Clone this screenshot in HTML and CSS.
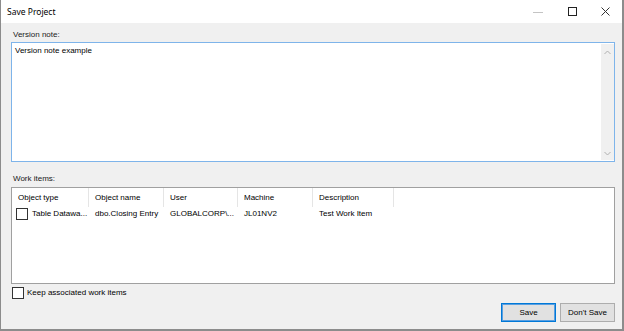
FILE: index.html
```html
<!DOCTYPE html>
<html>
<head>
<meta charset="utf-8">
<link rel="stylesheet" href="styles.css">
</head>
<body>
<div class="window">
  <div class="titlebar">
    <span class="title">Save Project</span>
    <div class="controls">
      <span class="ctl"><svg width="10" height="10" viewBox="0 0 10 10"><path d="M0 5.5H10" stroke="#c4c4c4" stroke-width="1"/></svg></span>
      <span class="ctl"><svg width="9" height="9" viewBox="0 0 9 9"><rect x="0.5" y="0.5" width="8" height="8" fill="none" stroke="#222" stroke-width="1"/></svg></span>
      <span class="ctl"><svg width="9" height="9" viewBox="0 0 9 9"><path d="M0.5 0.5L8.5 8.5M8.5 0.5L0.5 8.5" stroke="#333" stroke-width="1"/></svg></span>
    </div>
  </div>
  <div class="content">
    <div class="label">Version note:</div>
    <div class="note">
      <div class="note-text">Version note example</div>
      <div class="vscroll">
        <svg width="7" height="5" viewBox="0 0 7 5"><path d="M0.5 4L3.5 1L6.5 4" fill="none" stroke="#b0b0b0" stroke-width="1"/></svg>
        <svg width="7" height="5" viewBox="0 0 7 5"><path d="M0.5 1L3.5 4L6.5 1" fill="none" stroke="#b0b0b0" stroke-width="1"/></svg>
      </div>
    </div>
    <div class="label label-work">Work items:</div>
    <div class="list">
      <div class="row header">
        <div class="col c1">Object type</div>
        <div class="col c2">Object name</div>
        <div class="col c3">User</div>
        <div class="col c4">Machine</div>
        <div class="col c5">Description</div>
      </div>
      <div class="row item">
        <div class="col c1"><span class="box"></span>Table Datawa...</div>
        <div class="col c2">dbo.Closing Entry</div>
        <div class="col c3">GLOBALCORP\...</div>
        <div class="col c4">JL01NV2</div>
        <div class="col c5">Test Work Item</div>
      </div>
    </div>
    <label class="keep"><span class="box"></span>Keep associated work items</label>
    <div class="buttons">
      <button class="btn primary">Save</button>
      <button class="btn">Don't Save</button>
    </div>
  </div>
</div>
</body>
</html>
```
FILE: styles.css
```css
html, body {
  margin: 0;
  padding: 0;
  background: #ffffff;
}
body {
  font-family: "Liberation Sans", Arial, sans-serif;
  font-size: 8px;
  color: #000;
}
.window {
  width: 624px;
  height: 331px;
  box-sizing: border-box;
  border-left: 1px solid #8c8c8c;
  border-right: 2px solid #8c8c8c;
  border-bottom: 2px solid #8c8c8c;
  display: flex;
  flex-direction: column;
  background: #f0f0f0;
}
.titlebar {
  height: 23px;
  background: #ffffff;
  display: flex;
  align-items: center;
  justify-content: space-between;
  flex-shrink: 0;
}
.title {
  font-family: "Noto Sans", "Liberation Sans", sans-serif;
  font-size: 8.5px;
  padding-left: 6px;
  color: #000;
}
.controls {
  display: flex;
  height: 100%;
}
.ctl {
  width: 34px;
  display: flex;
  align-items: center;
  justify-content: center;
}
.ctl:last-child { width: 33px; }
.content {
  flex: 1;
  padding: 0 7px 0 10px;
  display: flex;
  flex-direction: column;
}
.label {
  margin-top: 5px;
  height: 13px;
  line-height: 13px;
  padding-left: 2px;
  color: #1a1a1a;
}
.note {
  margin-top: 1px;
  height: 120px;
  box-sizing: border-box;
  border: 1px solid #7eb4ea;
  background: #fff;
  display: flex;
}
.note-text {
  flex: 1;
  padding: 3px 3px;
}
.vscroll {
  width: 13px;
  margin: 1px 0;
  background: #f0f0f0;
  display: flex;
  flex-direction: column;
  justify-content: space-between;
  align-items: center;
  padding: 6px 0 4px;
}
.label-work {
  margin-top: 10px;
}
.list {
  margin-top: 2px;
  height: 97px;
  box-sizing: border-box;
  border: 1px solid #a0a0a0;
  background: #fff;
}
.row {
  display: flex;
  align-items: center;
}
.header {
  height: 19px;
}
.header .col {
  border-right: 1px solid #e5e5e5;
  height: 19px;
  line-height: 19px;
}
.item { height: 13px; }
.col {
  box-sizing: border-box;
  padding-left: 6px;
  white-space: nowrap;
  overflow: hidden;
}
.c1 { width: 77px; }
.c2 { width: 75px; }
.c3 { width: 74px; }
.c4 { width: 75px; }
.c5 { width: 81px; }
.item .c1 { padding-left: 4px; display: flex; align-items: center; }
.box {
  display: inline-block;
  width: 12px;
  height: 12px;
  box-sizing: border-box;
  border: 1px solid #333;
  background: #fff;
  margin-right: 4px;
  flex-shrink: 0;
}
.keep {
  margin-top: 2px;
  display: flex;
  align-items: center;
  height: 13px;
  padding-left: 1px;
}
.keep .box { margin-right: 3px; }
.buttons {
  margin-top: 4px;
  display: flex;
  justify-content: flex-end;
  gap: 4px;
}
.btn {
  font-family: "Liberation Sans", Arial, sans-serif;
  font-size: 8px;
  width: 55px;
  height: 19px;
  padding: 0;
  background: #e1e1e1;
  border: 1px solid #adadad;
  color: #000;
}
.btn.primary {
  border: 1px solid #0078d7;
  box-shadow: inset 0 0 0 1px #5a9fe0;
  width: 55px;
}
```
